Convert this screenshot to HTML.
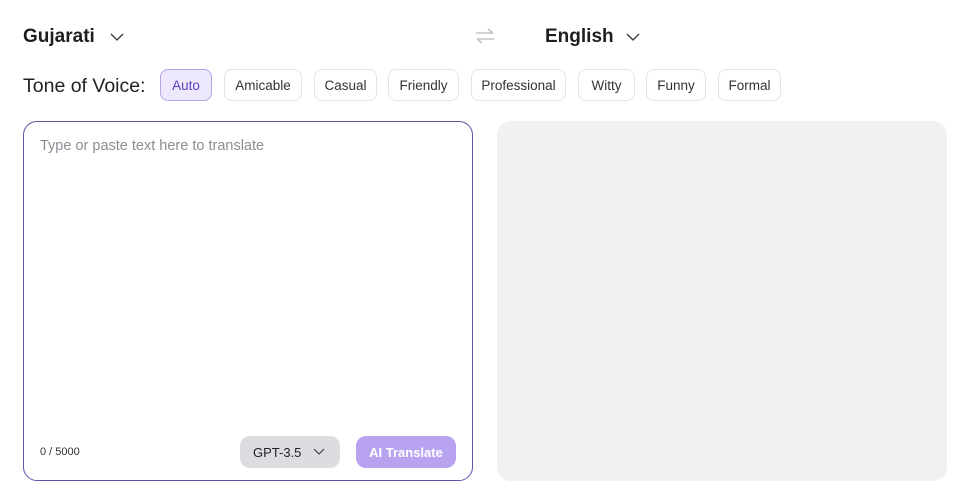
<!DOCTYPE html>
<html><head><style>
*{margin:0;padding:0;box-sizing:border-box}
body{width:966px;height:496px;background:#fff;font-family:"Liberation Sans",sans-serif;color:#222;position:relative;overflow:hidden}
.a{position:absolute}
.lang{font-size:19px;font-weight:bold;color:#1f1f1f}
.chip{position:absolute;top:69px;height:32px;border:1px solid #e3e3e6;border-radius:8px;font-size:13.5px;color:#333;display:flex;align-items:center;justify-content:center}
</style></head><body>
<div class="a lang" style="left:23px;top:26px">Gujarati</div>
<svg class="a" style="left:109px;top:31px" width="16" height="12"><path d="M2 3l6 6 6-6" fill="none" stroke="#333" stroke-width="1.3"/></svg>
<svg class="a" style="left:474px;top:27px" width="22" height="18"><path d="M2 6h17M14 2l5 4M20 12H3M8 16l-5-4" fill="none" stroke="#c4c4c8" stroke-width="1.6"/></svg>
<div class="a lang" style="left:545px;top:26px">English</div>
<svg class="a" style="left:625px;top:31px" width="16" height="12"><path d="M2 3l6 6 6-6" fill="none" stroke="#333" stroke-width="1.3"/></svg>
<div class="a" style="left:23px;top:75px;font-size:19.5px;color:#222">Tone of Voice:</div>
<div class="chip" style="left:160px;width:52px;background:#ede8fb;border-color:#b7a5ea;color:#5b3fc0">Auto</div>
<div class="chip" style="left:224px;width:78px">Amicable</div>
<div class="chip" style="left:314px;width:63px">Casual</div>
<div class="chip" style="left:388px;width:71px">Friendly</div>
<div class="chip" style="left:471px;width:95px">Professional</div>
<div class="chip" style="left:578px;width:57px">Witty</div>
<div class="chip" style="left:646px;width:60px">Funny</div>
<div class="chip" style="left:718px;width:63px">Formal</div>
<div class="a" style="left:23px;top:121px;width:450px;height:360px;border:1px solid #6a4ea6;border-radius:14px"></div>
<div class="a" style="left:40px;top:138px;font-size:14.5px;color:#8a8d93">Type or paste text here to translate</div>
<div class="a" style="left:40px;top:446px;font-size:11px;color:#333">0 / 5000</div>
<div class="a" style="left:240px;top:436px;width:100px;height:32px;background:#dcdde1;border-radius:10px;font-size:13px;color:#222;display:flex;align-items:center;padding-left:13px">GPT-3.5</div>
<svg class="a" style="left:313px;top:447px" width="12" height="9"><path d="M1 2l5 5 5-5" fill="none" stroke="#444" stroke-width="1.2"/></svg>
<div class="a" style="left:356px;top:436px;width:100px;height:32px;background:#b8a3f1;border-radius:10px;font-size:13px;font-weight:bold;color:#fff;display:flex;align-items:center;justify-content:center">AI Translate</div>
<div class="a" style="left:497px;top:121px;width:450px;height:360px;background:#f0f1f3;border-radius:14px"></div>
</body></html>
